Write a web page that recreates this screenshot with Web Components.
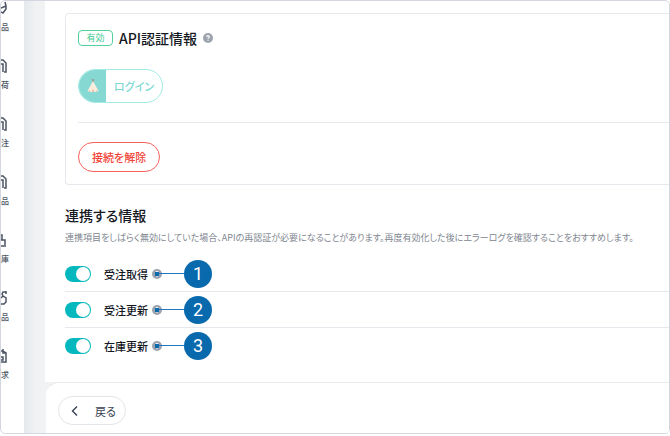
<!DOCTYPE html>
<html lang="ja">
<head>
<meta charset="utf-8">
<title>API連携設定</title>
<style>
body {
  margin: 0;
  background: #fff;
  color: #15181f;
  font-family: "Noto Sans CJK JP", "Noto Sans", sans-serif;
  font-feature-settings: "palt";
}
</style>
</head>
<body>
<app-frame>
  <side-item slot="nav" icon="tag">品</side-item>
  <side-item slot="nav" icon="box">荷</side-item>
  <side-item slot="nav" icon="box">注</side-item>
  <side-item slot="nav" icon="box">品</side-item>
  <side-item slot="nav" icon="stock">庫</side-item>
  <side-item slot="nav" icon="return">品</side-item>
  <side-item slot="nav" icon="bill">求</side-item>

  <auth-card status="有効" heading="API認証情報">
    <login-button slot="login">ログイン</login-button>
    <danger-button slot="footer">接続を解除</danger-button>
  </auth-card>

  <sync-section heading="連携する情報" note="連携項目をしばらく無効にしていた場合、APIの再認証が必要になることがあります。再度有効化した後にエラーログを確認することをおすすめします。">
    <toggle-row label="受注取得" step="1"></toggle-row>
    <toggle-row label="受注更新" step="2"></toggle-row>
    <toggle-row label="在庫更新" step="3"></toggle-row>
  </sync-section>

  <back-button slot="bottom">戻る</back-button>
</app-frame>

<script>
function makeTemplate(html) {
  const template = document.createElement("template");
  template.innerHTML = html;
  return template;
}

class BaseElement extends HTMLElement {
  constructor() {
    super();
    this.attachShadow({ mode: "open" });
    this.shadowRoot.appendChild(this.constructor.template.content.cloneNode(true));
  }
  find(selector) {
    return this.shadowRoot.querySelector(selector);
  }
}

class AppFrame extends BaseElement {
  static template = makeTemplate(`
<style>
:host{
  display:flex;
  box-sizing:border-box;
  border:1px solid #d3d6df;
  border-radius:5px;
  overflow:hidden;
  background:#fff;
}
nav{
  flex:none;
  width:23px;
  height:0;
}
.gutter{
  flex:none;
  width:21px;
  background:linear-gradient(90deg, #e6e9ec, #f0f2f4 60%);
}
.page{
  flex:1;
  min-width:0;
}
main{
  padding:12px 0 19px 20px;
}
.bottom{
  background:#f0f2f4;
}
footer{
  padding:13px 12px 8px;
  border-top:1px solid #e8eaee;
  border-left:1px solid #f3f4f6;
  border-radius:14px 0 0 0;
  background:#fff;
}
</style>
<nav><slot name="nav"></slot></nav>
<div class="gutter"></div>
<div class="page">
  <main><slot></slot></main>
  <div class="bottom"><footer><slot name="bottom"></slot></footer></div>
</div>
`);
}

const sideIcons = {
  tag: `<path d="M4 1L5 5L0 7M5 5V8L2 12L0 11"/>`,
  box: `<path d="M0 1H2L5 4V13H3M0 5H2V13"/>`,
  stock: `<path d="M0 2H1V7H4V12M0 7H1M0 13H5"/>`,
  return: `<path d="M5 1H2L1 3L2 5L5 7V11L3 13H0M0 7L2 5M5 0V3"/>`,
  bill: `<path d="M0 2H2L5 4V13H0M2 0V4H5M0 8H2V11H0"/>`,
};

class SideItem extends BaseElement {
  static template = makeTemplate(`
<style>
:host{
  display:flex;
  flex-direction:column;
  height:58px;
  color:#4b5563;
  font-size:8px;
  font-weight:500;
  line-height:12px;
}
svg{
  display:block;
  margin-bottom:6px;
  fill:none;
  stroke:currentColor;
  stroke-width:1.5;
}
</style>
<svg width="8" height="14" viewBox="0 0 8 14" aria-hidden="true"></svg>
<span><slot></slot></span>
`);
  connectedCallback() {
    this.find("svg").innerHTML = sideIcons[this.getAttribute("icon")];
  }
}

class HelpIcon extends BaseElement {
  static template = makeTemplate(`
<style>
:host{
  display:block;
  width:10px;
  height:10px;
}
svg{
  display:block;
}
</style>
<svg width="10" height="10" viewBox="0 0 10 10" aria-hidden="true">
  <circle cx="5" cy="5" r="5" fill="#9ca3af"/>
  <path d="M3.6 4Q3.7 2.6 5 2.6T6.4 3.9Q6.4 4.6 5.1 5.2V5.8M5.1 6.7V7.7" fill="none" stroke="#fff" stroke-width="1.1"/>
</svg>
`);
}

class AuthCard extends BaseElement {
  static template = makeTemplate(`
<style>
:host{
  display:block;
  border:1px solid #e6e8ed;
  border-right:0;
  border-radius:4px 0 0 4px;
  padding:12px 0 12px 12px;
}
header{
  display:flex;
  align-items:center;
  gap:6px;
  height:24px;
}
.status{
  box-sizing:border-box;
  width:35px;
  border:1px solid #4fd09c;
  border-radius:4px;
  color:#3fca92;
  font-size:9px;
  line-height:14px;
  text-align:center;
}
h2{
  margin:0;
  font-size:14px;
  font-weight:500;
  line-height:24px;
}
.login{
  padding:19px 0;
}
.footer{
  border-top:1px solid #e6e8ed;
  padding-top:19px;
}
</style>
<header><span class="status"></span><h2></h2><help-icon></help-icon></header>
<div class="login"><slot name="login"></slot></div>
<div class="footer"><slot name="footer"></slot></div>
`);
  connectedCallback() {
    this.find(".status").textContent = this.getAttribute("status");
    this.find("h2").textContent = this.getAttribute("heading");
  }
}

class LoginButton extends BaseElement {
  static template = makeTemplate(`
<style>
:host{
  display:block;
}
button{
  display:flex;
  align-items:stretch;
  height:34px;
  padding:0;
  border:1px solid #a0ebe4;
  border-radius:17px;
  overflow:hidden;
  background:#fff;
  color:#7ed8d1;
  font:inherit;
  font-size:11px;
  font-weight:500;
  font-feature-settings:inherit;
}
.logo{
  display:grid;
  place-items:center;
  width:27px;
  background:#86d8d3;
}
.text{
  width:56px;
  line-height:32px;
  text-align:center;
}
</style>
<button type="button">
  <span class="logo">
    <svg width="14" height="14" viewBox="0 0 14 14" aria-hidden="true">
      <path d="M7 2L12.5 12Q7 14 1.5 12Z" fill="#fbeedd"/>
      <path d="M6 0L7 2L8 0M7 1V3" fill="none" stroke="#a78c86" stroke-width=".8"/>
      <path d="M7 10L8 12.8H6Z" fill="#f29a8e"/>
      <path d="M3 11L4 12M11 11L10 12" stroke="#f5b8a5"/>
    </svg>
  </span>
  <span class="text"><slot></slot></span>
</button>
`);
}

class DangerButton extends BaseElement {
  static template = makeTemplate(`
<style>
:host{
  display:block;
}
button{
  display:block;
  height:30px;
  padding:0 13px;
  border:1px solid #f4605a;
  border-radius:15px;
  background:#fff;
  color:#f04438;
  font:inherit;
  font-size:11px;
  font-weight:500;
  font-feature-settings:inherit;
}
</style>
<button type="button"><slot></slot></button>
`);
}

class SyncSection extends BaseElement {
  static template = makeTemplate(`
<style>
:host{
  display:block;
  padding-top:18px;
}
h2{
  margin:0;
  font-size:14px;
  font-weight:500;
  line-height:24px;
}
p{
  margin:0;
  padding:3px 0 10px;
  color:#808690;
  font-size:9px;
  line-height:16px;
}
::slotted(toggle-row:not(:last-of-type)){
  border-bottom:1px solid #e6e8ed;
}
</style>
<h2></h2>
<p></p>
<slot></slot>
`);
  connectedCallback() {
    this.find("h2").textContent = this.getAttribute("heading");
    this.find("p").textContent = this.getAttribute("note");
  }
}

class ToggleRow extends BaseElement {
  static template = makeTemplate(`
<style>
:host{
  display:flex;
  align-items:center;
  height:35px;
}
label{
  display:flex;
  align-items:center;
  gap:13px;
  font-size:11px;
  font-weight:500;
  line-height:16px;
}
input{
  appearance:none;
  display:flex;
  justify-content:flex-end;
  box-sizing:border-box;
  width:26px;
  height:16px;
  margin:0;
  padding:1px;
  border-radius:8px;
  background:#05b8bd;
}
input::before{
  content:"";
  width:14px;
  height:14px;
  border-radius:7px;
  background:#fff;
}
input:not(:checked){
  justify-content:flex-start;
  background:#c5c9d0;
}
.help{
  position:relative;
  margin-left:4px;
}
step-marker{
  position:absolute;
  left:3px;
  top:-9px;
}
</style>
<label><input type="checkbox" role="switch" checked><span></span></label>
<div class="help"><help-icon></help-icon><step-marker></step-marker></div>
`);
  connectedCallback() {
    this.find("span").textContent = this.getAttribute("label");
    this.find("step-marker").textContent = this.getAttribute("step");
  }
}

class StepMarker extends BaseElement {
  static template = makeTemplate(`
<style>
:host{
  display:flex;
  align-items:center;
  height:28px;
}
.dot{
  width:4px;
  height:4px;
  background:#0869ad;
}
.line{
  width:25px;
  height:1px;
  background:#2277bb;
}
.number{
  width:28px;
  height:28px;
  border-radius:14px;
  background:#0869ad;
  color:#fff;
  font-family:Roboto, sans-serif;
  font-size:18px;
  line-height:27px;
  text-align:center;
}
</style>
<span class="dot"></span>
<span class="line"></span>
<span class="number"><slot></slot></span>
`);
}

class BackButton extends BaseElement {
  static template = makeTemplate(`
<style>
:host{
  display:block;
}
button{
  display:flex;
  align-items:center;
  gap:16px;
  height:29px;
  padding:0 9px 0 12px;
  border:1px solid #e2e5e9;
  border-radius:15px;
  background:#fff;
  color:#374151;
  font:inherit;
  font-size:11px;
  font-feature-settings:inherit;
}
</style>
<button type="button">
  <svg width="8" height="12" viewBox="0 0 8 12" aria-hidden="true">
    <path d="M6 1.5L1.5 6L6 10.5" fill="none" stroke="currentColor" stroke-width="1.4"/>
  </svg>
  <slot></slot>
</button>
`);
}

window.customElements.define("app-frame", AppFrame);
window.customElements.define("side-item", SideItem);
window.customElements.define("help-icon", HelpIcon);
window.customElements.define("auth-card", AuthCard);
window.customElements.define("login-button", LoginButton);
window.customElements.define("danger-button", DangerButton);
window.customElements.define("sync-section", SyncSection);
window.customElements.define("step-marker", StepMarker);
window.customElements.define("toggle-row", ToggleRow);
window.customElements.define("back-button", BackButton);
</script>
</body>
</html>
